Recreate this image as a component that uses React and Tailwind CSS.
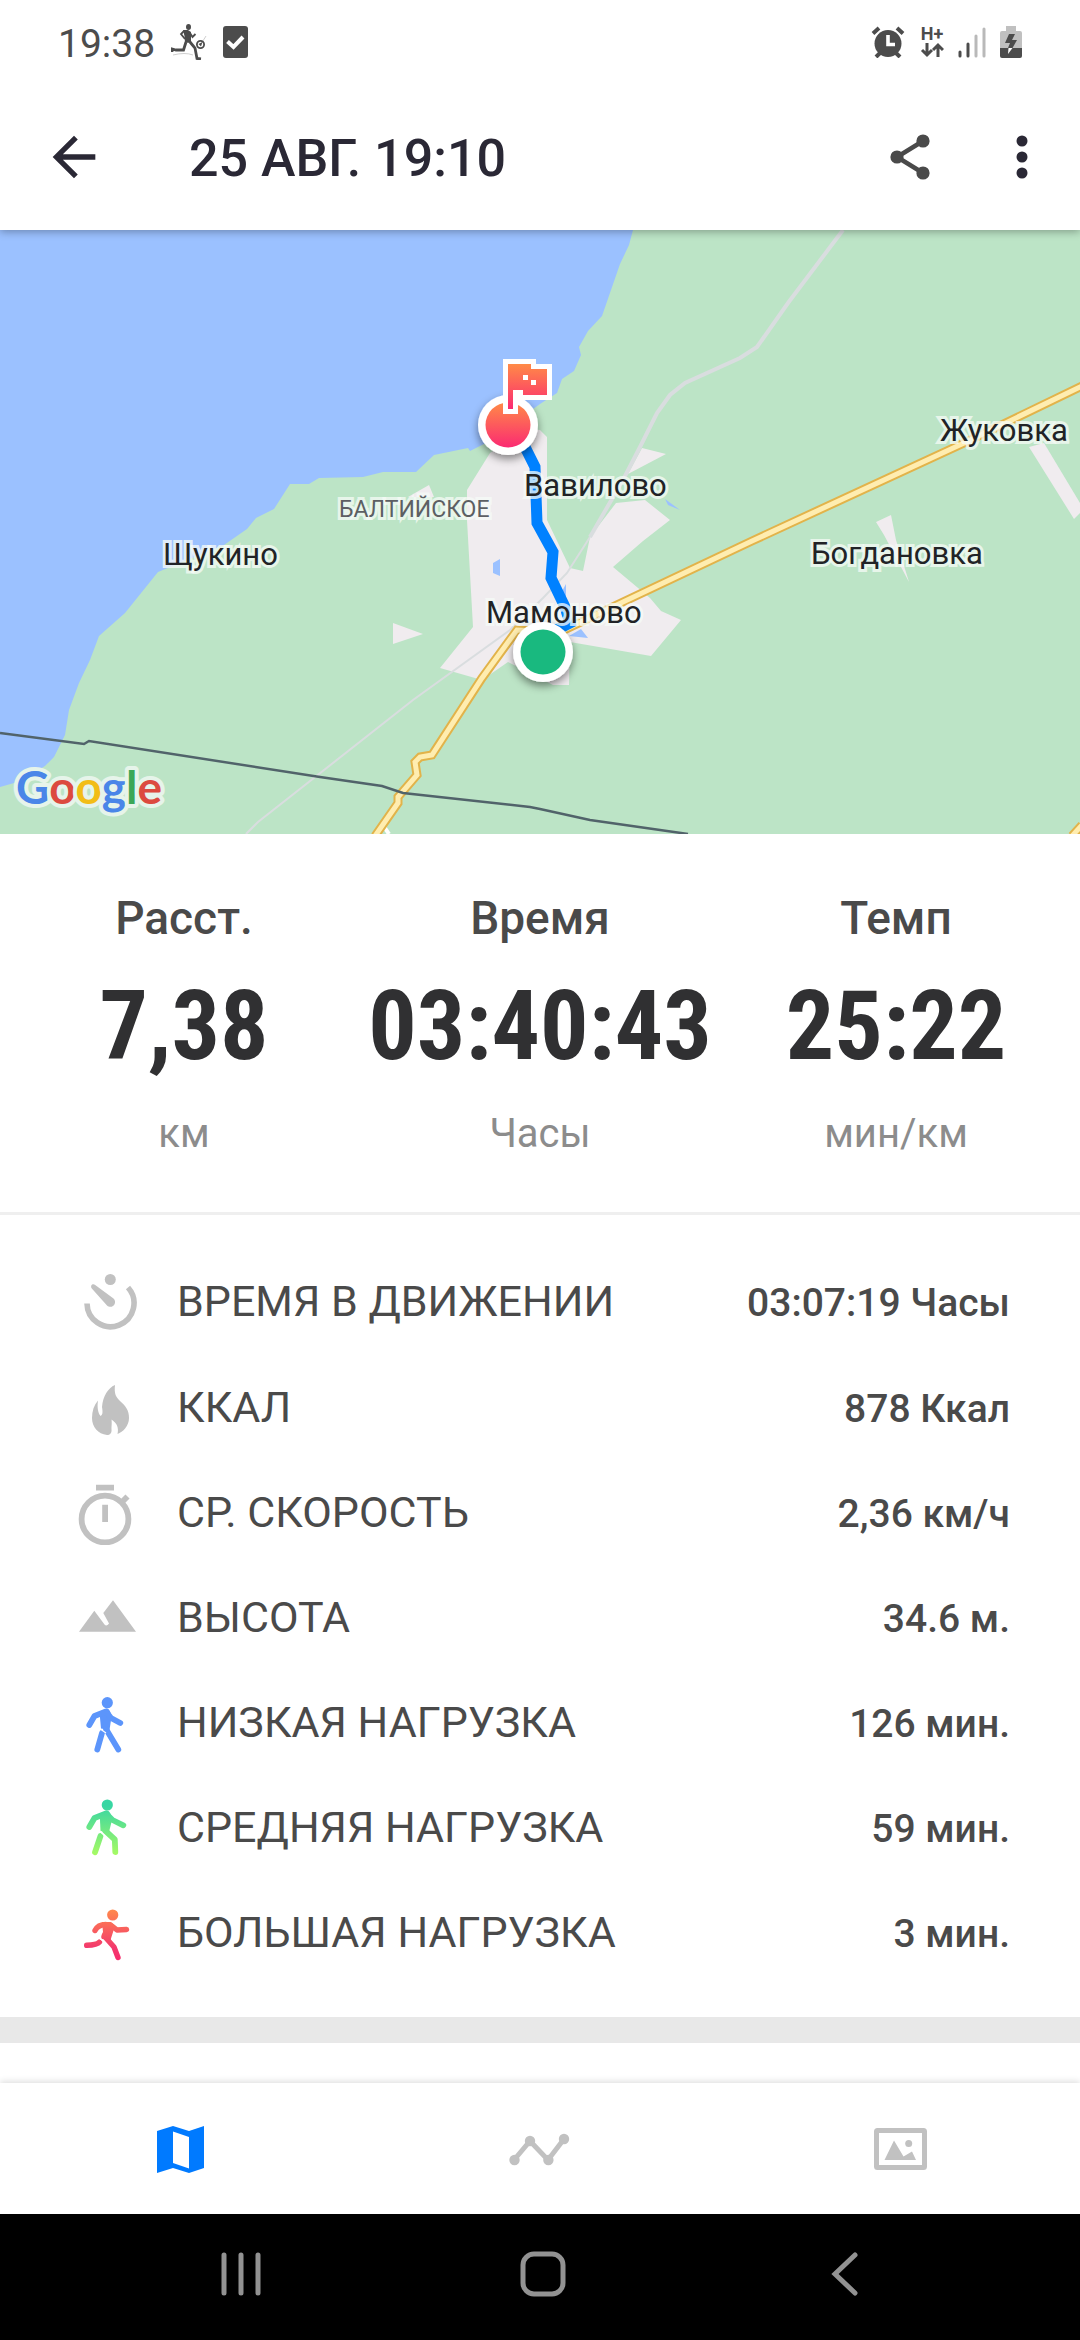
import React, { useState } from "react";
import { MdArrowBack } from "react-icons/md";

const places = [
  { name: "Щукино", x: 163, y: 565 },
  { name: "Вавилово", x: 524, y: 496 },
  { name: "Мамоново", x: 486, y: 623 },
  { name: "Жуковка", x: 940, y: 441 },
  { name: "Богдановка", x: 811, y: 564 },
];

const stats = [
  { label: "Расст.", value: "7,38", unit: "км" },
  { label: "Время", value: "03:40:43", unit: "Часы" },
  { label: "Темп", value: "25:22", unit: "мин/км" },
];

const Svg = ({ children, className = "w-16 h-16", viewBox = "0 0 64 64" }) => (
  <svg viewBox={viewBox} className={`shrink-0 ${className}`} fill="none" aria-hidden="true">
    {children}
  </svg>
);

const MovingTimeIcon = () => (
  <Svg>
    <path d="M12 34.5a23.5 23.5 0 1 0 41-16" stroke="#c1c1c1" strokeWidth="5.6" />
    <circle cx="35.3" cy="10.5" r="5.5" fill="#c1c1c1" />
    <path d="M16.8 19.6c-2-3 .8-5.6 3.4-3.6l18.3 13.4c4.5 4.5-1.5 11.5-6.5 7z" fill="#c1c1c1" />
  </Svg>
);

const FlameIcon = () => (
  <Svg>
    <path
      d="M40 9C39 18 41 21 45 25C51 30 54 35 54 42C54 50 48 56 42.5 58C44 52 42 47 36.5 43.5C37 48 36.5 49 36.5 53C37 57 35 59 32 59C23 58 17 51 17 42C17 35 19 29 23 24.5C22 31 23 37 25.5 40C27.5 39 28 37 27 31C28 20 33 12 40 9Z"
      fill="#c1c1c1"
    />
  </Svg>
);

const StopwatchIcon = () => (
  <Svg>
    <circle cx="30" cy="38" r="23.4" stroke="#c1c1c1" strokeWidth="5.8" />
    <path d="M21 3.7h18v5.8H21zM27.2 23.7H33V41h-5.8z" fill="#c1c1c1" />
    <path d="M46.5 21.5L52.5 15.5" stroke="#c1c1c1" strokeWidth="5.8" />
  </Svg>
);

const MountainIcon = () => (
  <Svg>
    <path d="M4 45.7L19.3 24.7L29.5 38.5Q31.5 41 34 37.5L28.3 27L38 14.3L61 45.7Z" fill="#c1c1c1" />
  </Svg>
);

const WalkIcon = () => (
  <Svg>
    <circle cx="32.3" cy="11.7" r="5.6" fill="#5c95fb" />
    <path d="M25 20.5L32 17.5Q35.5 18 36.5 26L34.5 39L26 37.5L25 27Z" fill="#5c95fb" />
    <g stroke="#5c95fb" strokeWidth="5.8" strokeLinecap="round" strokeLinejoin="round">
      <path d="M14.3 34L19.5 25L31 20.5L36 27L45.3 32" />
      <path d="M27 42L22.3 58.5M31 38L43.3 58.5" />
    </g>
    <path d="M24.5 37.5L31 42" stroke="#fff" strokeWidth="1.2" />
  </Svg>
);

const BriskIcon = () => (
  <Svg>
    <defs>
      <linearGradient id="brisk" gradientUnits="userSpaceOnUse" x1="0" y1="4" x2="0" y2="60">
        <stop offset="0.1" stopColor="#38d6a3" />
        <stop offset="1" stopColor="#a9fb62" />
      </linearGradient>
    </defs>
    <circle cx="32.3" cy="9" r="5.6" fill="url(#brisk)" />
    <path d="M25 17.5L32 14.5Q36 15 37 24L34 36L25.5 35L25 24Z" fill="url(#brisk)" />
    <g stroke="url(#brisk)" strokeWidth="5.8" strokeLinecap="round" strokeLinejoin="round">
      <path d="M14.3 31L19.5 22L31 17.5L37.5 24L48.3 29.3" />
      <path d="M25.5 40L20 56.3M30 34.5L39.8 43.5L40.3 56" />
    </g>
    <path d="M22.5 33L32 42" stroke="#fff" strokeWidth="1.2" />
  </Svg>
);

const RunIcon = () => (
  <Svg>
    <defs>
      <linearGradient id="run" gradientUnits="userSpaceOnUse" x1="0" y1="8" x2="0" y2="60">
        <stop offset="0" stopColor="#ff8a4c" />
        <stop offset="0.75" stopColor="#f3396d" />
        <stop offset="1" stopColor="#f8296d" />
      </linearGradient>
    </defs>
    <circle cx="37.7" cy="14" r="5.6" fill="url(#run)" />
    <path d="M27 21L36 21Q40 23 39 28L35.5 39L27 38Q25 36 28 31Z" fill="url(#run)" />
    <g stroke="url(#run)" strokeWidth="5.4" strokeLinecap="round" strokeLinejoin="round">
      <path d="M20 29.5Q23 23.5 31 23.5L37 25L42 29L51.5 28.5" />
      <path d="M24.5 41Q22 44 11.7 44.3M31 37L39 46L43 56.5" />
    </g>
    <path d="M22.5 36L30 42" stroke="#fff" strokeWidth="1" />
  </Svg>
);

const details = [
  { icon: MovingTimeIcon, label: "ВРЕМЯ В ДВИЖЕНИИ", value: "03:07:19 Часы" },
  { icon: FlameIcon, label: "ККАЛ", value: "878 Ккал" },
  { icon: StopwatchIcon, label: "СР. СКОРОСТЬ", value: "2,36 км/ч" },
  { icon: MountainIcon, label: "ВЫСОТА", value: "34.6 м." },
  { icon: WalkIcon, label: "НИЗКАЯ НАГРУЗКА", value: "126 мин." },
  { icon: BriskIcon, label: "СРЕДНЯЯ НАГРУЗКА", value: "59 мин." },
  { icon: RunIcon, label: "БОЛЬШАЯ НАГРУЗКА", value: "3 мин." },
];

const StatusBar = () => (
  <div className="flex h-[84px] items-center justify-between px-[58px] text-[#4c4c4c]">
    <div className="flex items-center gap-4">
      <span className="pt-1 text-[39px] leading-none">19:38</span>
      <Svg className="w-9 h-9" viewBox="0 0 36 36">
        <path d="M2 31Q14 28 22 31M35 12L30 20" stroke="#cfcfcf" strokeWidth="1" />
        <ellipse cx="17.5" cy="3" rx="2.5" ry="3" fill="#4c4c4c" />
        <path d="M12 6L17 6L20 8L20 19L14 18.5L13.5 12Z" fill="#4c4c4c" />
        <path d="M13 7L10 10L14 15M19 9L21.5 13L24.5 10" stroke="#4c4c4c" strokeWidth="1.8" />
        <path d="M15 18L12.5 26L5 26L1 25L1 28M19 18L24 24L26 34.5L30 35" stroke="#4c4c4c" strokeWidth="2.8" />
        <circle cx="29.5" cy="20.5" r="3.6" stroke="#4c4c4c" strokeWidth="1.8" />
        <path d="M27.5 20L31.5 18L30 22.5Z" fill="#4c4c4c" />
      </Svg>
      <Svg className="w-[25px] h-8" viewBox="0 0 25 32">
        <rect width="25" height="32" rx="3" fill="#4c4c4c" />
        <path d="M4.5 15.5L10.5 21L20 11" stroke="#fff" strokeWidth="4" />
      </Svg>
    </div>

    <div className="flex items-center gap-[14px]">
      <Svg className="w-9 h-8" viewBox="0 0 36 32">
        <circle cx="18" cy="17.5" r="13.5" fill="#4c4c4c" />
        <path d="M3 7.5L9 2M33 7.5L27 2M6 31L10 27M30 31L26 27" stroke="#4c4c4c" strokeWidth="4" />
        <path d="M18 9v9.5h7" stroke="#fff" strokeWidth="3.6" />
      </Svg>
      <div className="flex flex-col items-center">
        <span className="text-lg leading-4 font-bold">H+</span>
        <Svg className="w-6 h-4" viewBox="0 0 24 16">
          <path d="M7 1v11M2 8l5 5l5-5M18 15V4M13 8l5-5l5 5" stroke="#4c4c4c" strokeWidth="3" />
        </Svg>
      </div>
      <Svg className="w-7 h-8" viewBox="0 0 28 32">
        <path d="M2 26v4M10 18v12" stroke="#4c4c4c" strokeWidth="3" strokeLinecap="round" />
        <path d="M18 10v20M26 3v27" stroke="#b9b9b9" strokeWidth="3" strokeLinecap="round" />
      </Svg>
      <Svg className="w-[22px] h-8" viewBox="0 0 22 32">
        <path d="M6 0h10v5h4a2 2 0 0 1 2 2v16H0V7a2 2 0 0 1 2-2h4z" fill="#c0c0c0" />
        <path d="M0 22h22v8a2 2 0 0 1-2 2H2a2 2 0 0 1-2-2z" fill="#4c4c4c" />
        <path d="M9 8h6l-3 6h5l-4.5 8H8l2-5H5z" fill="#4c4c4c" />
        <path d="M8.5 22h4l-4.5 6z" fill="#fff" />
      </Svg>
    </div>
  </div>
);

const RouteMap = () => (
  <svg
    viewBox="0 230 1080 604"
    preserveAspectRatio="xMidYMid slice"
    className="block w-full h-[604px]"
    role="img"
    aria-label="Карта маршрута"
  >
    <defs>
      <linearGradient id="finish" x1="0" y1="0" x2="0" y2="1">
        <stop offset="0" stopColor="#ff8a47" />
        <stop offset="1" stopColor="#fb2a72" />
      </linearGradient>
      <filter id="pinShadow" x="-40%" y="-40%" width="180%" height="180%">
        <feDropShadow dx="0" dy="4" stdDeviation="4" floodColor="#000" floodOpacity="0.45" />
      </filter>
    </defs>

    {/* land and water */}
    <rect y="230" width="1080" height="604" fill="#bce4c6" />
    <path
      d="M0 230H633L629 245L620 264L611 290L602 316L588 331L579 347L581 355L574 371L562 379L557 393L540 404L518 420L490 441L470 451L468 448L434 455L416 472L383 472L363 477L319 478L309 484L290 484L274 509L256 518L247 529L224 545L158 572L125 613L99 636L90 660L79 683L69 710L65 735L60 745L54 757L45 766L30 775L14 783L0 787Z"
      fill="#9bc1ff"
    />

    {/* built-up areas */}
    <g fill="#f0ecef">
      <path d="M525 428L540 430L547 437V520L570 568L583 571L590 537L616 503L645 500L670 520L643 541L613 567L650 598L661 611L681 620L651 656L570 642L569 685H553L508 662L482 680L440 668L473 627L467 520V490L490 453Z" />
      <path d="M642 448L666 454L628 474Z" />
      <path d="M393 623L423 634L393 644Z" />
      <path d="M429 485L434 497H408Z" />
      <path d="M1029 447L1044 443L1080 503V513L1074 519Z" />
      <path d="M876 522L891 515L896 540L909 582L884 535Z" />
    </g>
    <g fill="#9bc1ff">
      <path d="M493 563L500 559V576L493 573Z" />
      <path d="M581 629L588 638L569 636Z" />
      <path d="M566 584L566 597L561 593Z" />
      <path d="M665 499L680 510L668 505Z" />
    </g>

    {/* minor roads */}
    <g stroke="#d9dddf" fill="none">
      <path d="M246 834L258 822L413 700L510 630L543 598L567 573L590 537" strokeWidth="2" />
      <path d="M590 537L623 480L640 447L657 413L670 395L685 383L740 358L757 347L788 303L843 230" strokeWidth="4" />
    </g>

    {/* highway */}
    <path d="M383 825L389 834" stroke="#fff" strokeWidth="4" />
    {["#e2b34a", "#ffedb0"].map((color, i) => (
      <path
        key={color}
        d="M1082 386L964 443L752 541L697 567L623 602L560 632L517 630L482 678L432 755L420 757L415 762L417 775L398 797V803L375 836M1082 825L1072 836"
        stroke={color}
        strokeWidth={i === 0 ? 9 : 5}
        fill="none"
      />
    ))}

    <path
      d="M0 733L84 744L89 741L320 777L382 786L403 793L530 807L540 809L590 820L688 834"
      stroke="#51636a"
      strokeWidth="2.5"
      fill="none"
    />

    <path
      d="M508 425L525 447L535 467L537 523L553 552L551 578L565 607L570 623L558 629L543 652"
      stroke="#0081ff"
      strokeWidth="11"
      fill="none"
    />

    <g
      fontFamily="Roboto, sans-serif"
      fontSize="31"
      fill="#212326"
      stroke="#f6fbf7"
      strokeOpacity="0.75"
      strokeWidth="6"
      paintOrder="stroke"
    >
      <text x="339" y="517" fontSize="23" fill="#5c5f63">
        БАЛТИЙСКОЕ
      </text>
      {places.map((place) => (
        <text key={place.name} x={place.x} y={place.y}>
          {place.name}
        </text>
      ))}
    </g>

    {/* finish pin */}
    <circle cx="508" cy="425" r="30" fill="#fff" filter="url(#pinShadow)" />
    <circle cx="508" cy="425" r="22.5" fill="url(#finish)" />
    <path
      d="M508 364H531V369H547V395H523V390H513V409H508Z"
      fill="url(#finish)"
      stroke="#fff"
      strokeWidth="10"
      paintOrder="stroke"
    />
    <path d="M523 375h5v5h-5zM531 380h5v5h-5z" fill="#fff" />

    {/* start pin */}
    <circle cx="543" cy="652" r="30" fill="#fff" filter="url(#pinShadow)" />
    <circle cx="543" cy="652" r="22.5" fill="#19b97f" />

    <text
      x="16"
      y="804"
      fontFamily="Lato, sans-serif"
      fontSize="46"
      fontWeight="700"
      stroke="#e6f4ea"
      strokeWidth="8"
      strokeLinejoin="round"
      paintOrder="stroke"
    >
      <tspan fill="#4a86e8">G</tspan>
      <tspan fill="#dc4a3f">o</tspan>
      <tspan fill="#f2bd16">o</tspan>
      <tspan fill="#4a86e8">g</tspan>
      <tspan fill="#3ba757">l</tspan>
      <tspan fill="#dc4a3f">e</tspan>
    </text>
  </svg>
);

const tabs = [
  {
    id: "map",
    label: "Карта",
    icon: (
      <path
        fillRule="evenodd"
        fill="currentColor"
        d="M9 14L25 9L41 14L56 9V51L41 56L25 51L9 56ZM25 14.5V46L41 51.5V20Z"
      />
    ),
  },
  {
    id: "chart",
    label: "Графики",
    icon: (
      <g fill="currentColor">
        <path d="M6 43L22 24L40 43L56 22" fill="none" stroke="currentColor" strokeWidth="5" />
        <circle cx="6.5" cy="43" r="5.2" />
        <circle cx="22" cy="24" r="5.2" />
        <circle cx="40.4" cy="43" r="5.2" />
        <circle cx="56" cy="22" r="5.2" />
      </g>
    ),
  },
  {
    id: "photos",
    label: "Фото",
    icon: (
      <g fill="currentColor">
        <rect x="8.5" y="13.5" width="48" height="37" rx="1" fill="none" stroke="currentColor" strokeWidth="5" />
        <path d="M16.5 43L26 23.5L35.5 39.5L44 34.5L48 43Z" />
        <circle cx="40.7" cy="26.5" r="3.5" />
      </g>
    ),
  },
];

const App = () => {
  const [tab, setTab] = useState("map");

  return (
    <div className="flex min-h-screen flex-col bg-white font-['Roboto',sans-serif] text-[#4a4a4a]">
      <header className="relative z-10 bg-white shadow-[0_2px_8px_rgba(0,0,0,0.3)]">
        <StatusBar />
        <div className="flex h-[146px] items-center pl-[42px] pr-[46px] text-[#2a2835]">
          <button type="button" aria-label="Назад">
            <MdArrowBack className="h-16 w-16" />
          </button>
          <h1 className="flex-1 pt-1 pl-[83px] text-[52px] leading-none font-medium">25 АВГ. 19:10</h1>
          <div className="flex items-center gap-[76px]">
            <button type="button" aria-label="Поделиться">
              <Svg className="w-12 h-12" viewBox="0 0 48 48">
                <path d="M37 8L11 24L37 40" stroke="#4a4a4a" strokeWidth="4.5" />
                <g fill="#4a4a4a">
                  <circle cx="37" cy="8" r="6.6" />
                  <circle cx="11" cy="24" r="6.6" />
                  <circle cx="37" cy="40" r="6.6" />
                </g>
              </Svg>
            </button>
            <button type="button" aria-label="Меню">
              <Svg className="w-6 h-12" viewBox="0 0 24 48">
                <g fill="#2a2835">
                  <circle cx="12" cy="8" r="5.5" />
                  <circle cx="12" cy="24" r="5.5" />
                  <circle cx="12" cy="40" r="5.5" />
                </g>
              </Svg>
            </button>
          </div>
        </div>
      </header>

      <main className="flex-1">
        <RouteMap />

        <section className="grid grid-cols-3 border-b-3 border-[#efefef] px-1.5 pt-[54px] pb-[48px] text-center">
          {stats.map((stat) => (
            <div key={stat.label} className="flex flex-col items-center">
              <span className="text-[46px] leading-[60px] font-medium">{stat.label}</span>
              <span className="font-['Roboto_Condensed','Liberation_Sans_Narrow','Roboto',sans-serif] text-[96px] leading-[156px] font-bold text-[#303032]">
                {stat.value}
              </span>
              <span className="text-[40px] leading-[60px] text-[#8c8c8c]">{stat.unit}</span>
            </div>
          ))}
        </section>

        <ul className="border-b-26 border-[#e8e8e8] pt-8 pb-8 pl-[75px] pr-[70px]">
          {details.map(({ icon: Icon, label, value }) => (
            <li key={label} className="flex h-[105px] items-center first:h-[108px]">
              <Icon />
              <span className="flex-1 pl-[38px] text-[43px] leading-none">{label}</span>
              <span className="pt-1 text-[39px] leading-none font-medium">{value}</span>
            </li>
          ))}
        </ul>
      </main>

      <nav className="grid h-[131px] grid-cols-3 bg-white shadow-[0_-2px_6px_rgba(0,0,0,0.12)]">
        {tabs.map(({ id, label, icon }) => (
          <button
            key={id}
            type="button"
            aria-label={label}
            onClick={() => setTab(id)}
            className={`flex items-center justify-center ${tab === id ? "text-[#007aff]" : "text-[#c1c1c1]"}`}
          >
            <Svg>{icon}</Svg>
          </button>
        ))}
      </nav>

      {/* system navigation */}
      <div className="grid h-[126px] grid-cols-3 bg-black pl-[90px] pr-[84px] pb-1.5 text-[#929292]">
        <button type="button" aria-label="Недавние" className="flex items-center justify-center">
          <Svg className="w-12 h-12" viewBox="0 0 48 48">
            <path d="M7 5v38M24 5v38M41 5v38" stroke="currentColor" strokeWidth="5" strokeLinecap="round" />
          </Svg>
        </button>
        <button type="button" aria-label="Домой" className="flex items-center justify-center">
          <Svg className="w-12 h-12" viewBox="0 0 48 48">
            <rect x="4" y="4" width="40" height="40" rx="11" stroke="currentColor" strokeWidth="5" />
          </Svg>
        </button>
        <button type="button" aria-label="Назад (система)" className="flex items-center justify-center">
          <Svg className="w-12 h-12" viewBox="0 0 48 48">
            <path d="M34 5L14 24L34 43" stroke="currentColor" strokeWidth="5" strokeLinecap="round" />
          </Svg>
        </button>
      </div>
    </div>
  );
};

export default App;
